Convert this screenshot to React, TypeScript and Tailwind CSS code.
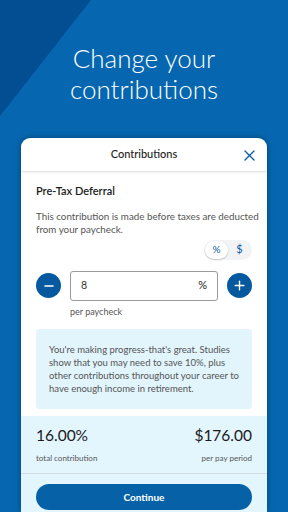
import { Minus, Plus } from "lucide-react";

const font = { fontFamily: "Lato, 'Open Sans', sans-serif" };

function Toggle() {
  return (
    <div className="flex h-[20px] w-[48px] items-center rounded-full bg-[#f1f3f4] p-[1px]">
      <div className="flex h-[18px] w-[23px] items-center justify-center rounded-full bg-white text-[10px] text-[#0b5da3] shadow-[0_1px_2px_rgba(0,0,0,0.2)]">
        %
      </div>
      <div className="flex h-[18px] flex-1 items-center justify-center text-[11px] text-[#0b5da3]">$</div>
    </div>
  );
}

function RoundButton({ children }: { children: React.ReactNode }) {
  return (
    <button className="flex h-[25px] w-[25px] shrink-0 items-center justify-center rounded-full bg-[#06599e] text-white">
      {children}
    </button>
  );
}

export default function App() {
  return (
    <div className="relative flex h-[512px] w-[288px] flex-col overflow-hidden bg-[#0667b0]" style={font}>
      <svg className="absolute left-0 top-0" width="288" height="512" viewBox="0 0 288 512">
        <polygon points="0,0 91,0 0,116" fill="#034d93" />
      </svg>

      <h1 className="relative mt-[43px] text-center text-[26px] font-light leading-[31px] text-white">
        Change your
        <br />
        contributions
      </h1>

      <div className="relative mx-[21px] mt-[33px] flex flex-1 flex-col rounded-t-[9px] bg-white shadow-[0_0_6px_rgba(0,0,0,0.35)]">
        <div className="relative flex h-[34px] items-center justify-center border-b border-[#e6e6e6] shadow-[0_1px_2px_rgba(0,0,0,0.06)]">
          <span className="text-[11px] font-medium text-[#222]">Contributions</span>
          <svg className="absolute right-[12px] top-[12px]" width="11" height="11" viewBox="0 0 11 11">
            <path d="M1 1L10 10M10 1L1 10" stroke="#0b5da3" strokeWidth="1.4" strokeLinecap="round" />
          </svg>
        </div>

        <div className="flex flex-col px-[15px]">
          <div className="mt-[11px] text-[11px] font-semibold text-[#1c1c1c]">Pre-Tax Deferral</div>
          <p className="mt-[10px] whitespace-nowrap text-[9.8px] leading-[13px] text-[#555]">
            This contribution is made before taxes are deducted
            <br />
            from your paycheck.
          </p>

          <div className="mt-[4px] flex justify-end">
            <Toggle />
          </div>

          <div className="mt-[11px] flex items-center gap-[9px]">
            <RoundButton>
              <Minus className="h-[14px] w-[14px]" strokeWidth={2.2} />
            </RoundButton>
            <div className="flex h-[30px] flex-1 items-center justify-between rounded-[3px] border border-[#9a9a9a] px-[10px]">
              <span className="text-[10.5px] text-[#333]">8</span>
              <span className="text-[11px] text-[#222]">%</span>
            </div>
            <RoundButton>
              <Plus className="h-[15px] w-[15px]" strokeWidth={2.2} />
            </RoundButton>
          </div>
          <div className="ml-[34px] mt-[4px] text-[9px] text-[#555]">per paycheck</div>

          <div className="mt-[11px] whitespace-nowrap rounded-[4px] bg-[#e2f4fc] px-[13px] py-[14px] text-[9.5px] leading-[13px] text-[#555]">
            You're making progress-that's great. Studies
            <br />
            show that you may need to save 10%, plus
            <br />
            other contributions throughout your career to
            <br />
            have enough income in retirement.
          </div>
        </div>

        <div className="mt-[7px] flex flex-1 flex-col bg-[#e3f5fd]">
          <div className="flex justify-between px-[15px] pt-[9px]">
            <div className="flex flex-col">
              <span className="text-[15.5px] leading-[21px] text-[#1a1a1a]">16.00%</span>
              <span className="mt-[7px] text-[8px] leading-[10px] text-[#555]">total contribution</span>
            </div>
            <div className="flex flex-col items-end">
              <span className="text-[15.5px] leading-[21px] text-[#1a1a1a]">$176.00</span>
              <span className="mt-[7px] text-[8px] leading-[10px] text-[#555]">per pay period</span>
            </div>
          </div>
          <div className="mt-[10px] border-t border-[#d3dde1]" />
          <div className="px-[15px] pt-[10px]">
            <button className="flex h-[26px] w-full items-center justify-center rounded-full bg-[#0761a6] text-[10px] font-bold text-white">
              Continue
            </button>
          </div>
        </div>
      </div>
    </div>
  );
}
